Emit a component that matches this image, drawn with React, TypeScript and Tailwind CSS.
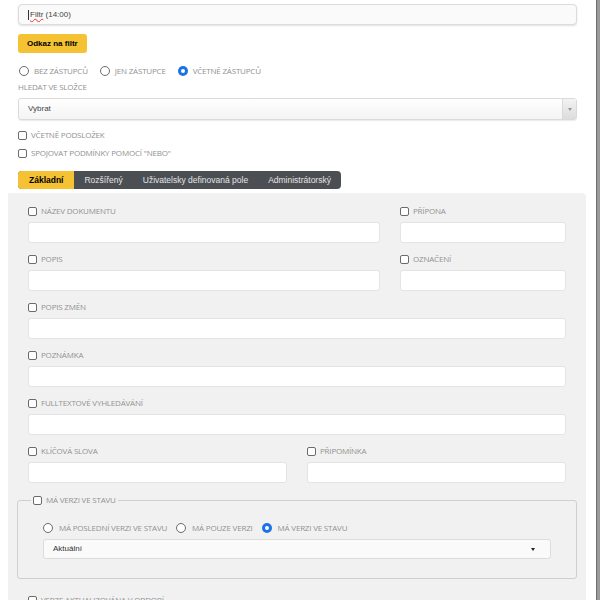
import React from 'react';

const font = { fontFamily: '"Open Sans", "Liberation Sans", sans-serif' };
const arial = { fontFamily: '"Liberation Sans", Arial, sans-serif' };

function Box() {
  return <span className="inline-block w-[9px] h-[9px] rounded-[2px] border border-[#6b6b6b] bg-white shrink-0" />;
}

function Radio({ on }: { on?: boolean }) {
  return on ? (
    <span className="inline-flex w-[10px] h-[10px] rounded-full bg-[#1a73e8] items-center justify-center shrink-0">
      <span className="w-[4px] h-[4px] rounded-full bg-white" />
    </span>
  ) : (
    <span className="inline-block w-[10px] h-[10px] rounded-full border border-[#6b6b6b] bg-white shrink-0" />
  );
}

function Check({ label }: { label: string }) {
  return (
    <label className="flex items-center gap-[4px] h-[12px] text-[8px] text-[#919191] uppercase tracking-tight">
      <Box />
      <span>{label}</span>
    </label>
  );
}

function Field({ label }: { label: string }) {
  return (
    <div className="flex flex-col gap-[5px]">
      <Check label={label} />
      <div className="h-[21px] bg-white border border-[#e4e4e4] rounded-[3px]" />
    </div>
  );
}

const TABS = ['Základní', 'Rozšířený', 'Uživatelsky definovaná pole', 'Administrátorský'];

export default function App() {
  return (
    <div className="flex h-[600px] overflow-hidden bg-white" style={font}>
      <div className="w-[596px] flex flex-col">
        <div className="pl-[18px] pr-[19px] pt-[4px]">
          <div className="h-[21px] rounded-[4px] border border-[#dcdcdc] bg-[#fafafa] shadow-[0_1px_2px_rgba(0,0,0,0.12)] flex items-center pl-[9px] text-[8px] text-[#444]" style={arial}>
            <span className="w-px h-[10px] bg-[#333] mr-px" />
            <span className="underline decoration-wavy decoration-[#e33] decoration-1">Filtr</span>
            <span>&nbsp;(14:00)</span>
          </div>

          <button className="mt-[9px] h-[19px] px-[9px] rounded-[3px] bg-[#f4c232] text-[8px] font-bold text-black" style={arial}>
            Odkaz na filtr
          </button>

          <div className="mt-[12px] flex items-center h-[12px] text-[8px] text-[#919191] uppercase tracking-tight">
            <span className="flex items-center gap-[5px] ml-px"><Radio /> Bez zástupců</span>
            <span className="flex items-center gap-[5px] ml-[12px]"><Radio /> Jen zástupce</span>
            <span className="flex items-center gap-[5px] ml-[12px]"><Radio on /> Včetně zástupců</span>
          </div>
          <div className="mt-[4px] text-[8px] text-[#919191] uppercase tracking-tight h-[12px]">Hledat ve složce</div>

          <div className="mt-[5px] h-[22px] rounded-[3px] border border-[#dadada] bg-gradient-to-b from-white to-[#f4f4f4] flex items-center shadow-[0_1px_1px_rgba(0,0,0,0.08)]">
            <span className="flex-1 pl-[9px] text-[8px] text-[#444]" style={arial}>Vybrat</span>
            <span className="w-[14px] h-full border-l border-[#dadada] bg-gradient-to-b from-[#f3f3f3] to-[#dcdcdc] flex items-center justify-center">
              <span className="w-0 h-0 border-l-[2px] border-r-[2px] border-t-[3px] border-l-transparent border-r-transparent border-t-[#999]" />
            </span>
          </div>

          <div className="mt-[9px] flex flex-col gap-[6px]">
            <Check label="Včetně podsložek" />
            <Check label={'Spojovat podmínky pomocí "NEBO"'} />
          </div>

          <div className="mt-[12px] inline-flex h-[18px] rounded-[4px] overflow-hidden bg-[#4b4e53] text-[8.5px]" style={arial}>
            {TABS.map((t, i) => (
              <span
                key={t}
                className={i === 0 ? 'px-[11px] flex items-center bg-[#f4c232] text-black font-semibold' : 'px-[10px] flex items-center text-[#e4e4e4]'}
              >
                {t}
              </span>
            ))}
          </div>
        </div>

        <div className="ml-[8px] mr-[10px] mt-[4px] flex-1 bg-[#f1f1f1] rounded-tr-[4px] px-[20px] pt-[12px] flex flex-col gap-[10px]">
          <div className="grid grid-cols-[352px_166px] gap-x-[20px] gap-y-[10px]">
            <Field label="Název dokumentu" />
            <Field label="Přípona" />
            <Field label="Popis" />
            <Field label="Označení" />
          </div>
          <Field label="Popis změn" />
          <Field label="Poznámka" />
          <Field label="Fulltextové vyhledávání" />
          <div className="grid grid-cols-2 gap-x-[20px]">
            <Field label="Klíčová slova" />
            <Field label="Připomínka" />
          </div>

          <fieldset className="-mx-[11px] mt-[1px] border border-[#cfcfcf] rounded-[3px] px-[25px] pb-[19px] pt-[16px]">
            <legend className="-ml-[12px] px-[2px] flex items-center gap-[4px] text-[8px] text-[#919191] uppercase tracking-tight">
              <Box /> Má verzi ve stavu
            </legend>
            <div className="flex items-center h-[12px] text-[8px] text-[#919191] uppercase tracking-tight">
              <span className="flex items-center gap-[6px]"><Radio /> Má poslední verzi ve stavu</span>
              <span className="flex items-center gap-[6px] ml-[9px]"><Radio /> Má pouze verzi</span>
              <span className="flex items-center gap-[6px] ml-[9px]"><Radio on /> Má verzi ve stavu</span>
            </div>
            <div className="mt-[5px] h-[20px] rounded-[3px] border border-[#dcdcdc] bg-[#fafafa] flex items-center px-[9px]">
              <span className="flex-1 text-[8px] text-[#333]" style={arial}>Aktuální</span>
              <span className="mr-[6px] w-0 h-0 border-l-[2.5px] border-r-[2.5px] border-t-[3px] border-l-transparent border-r-transparent border-t-[#222]" />
            </div>
          </fieldset>

          <div className="mt-[5px]">
            <Check label="Verze aktualizována v období" />
          </div>
        </div>
      </div>
      <div className="w-[4px] bg-[#9a9a9a] border-l border-[#6e6e6e]" />
    </div>
  );
}
